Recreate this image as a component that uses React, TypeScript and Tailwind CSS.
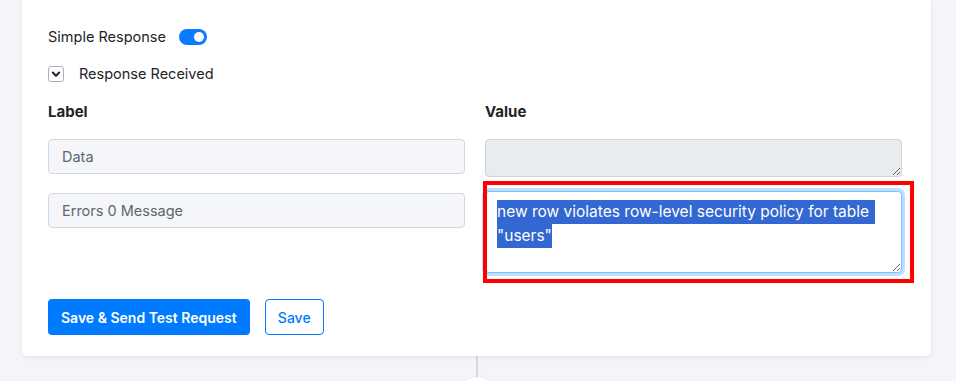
import React from "react";

export default function App() {
  return (
    <div
      className="relative h-[381px] w-[956px] overflow-hidden bg-[#f3f5f8] text-[#212529]"
      style={{ fontFamily: "Inter, 'Noto Sans', sans-serif" }}
    >
      <div className="relative z-10 ml-[22px] w-[909px] rounded-b-[5px] bg-white pl-[26px] pr-[29px] pt-[27px] pb-[21px] shadow-[0_1px_4px_rgba(0,0,0,0.08)]">
        {/* Simple Response toggle */}
        <div className="flex h-[20px] items-center gap-[13px] text-[14.5px]">
          <span>Simple Response</span>
          <span className="relative inline-block h-[16px] w-[28px] rounded-full bg-[#0b7bff]">
            <span className="absolute right-[3px] top-[3px] h-[10px] w-[10px] rounded-full bg-white" />
          </span>
        </div>

        {/* Response Received */}
        <div className="mt-[19px] flex h-[16px] items-center gap-[15px] text-[14.5px]">
          <span className="flex h-[16px] w-[16px] items-center justify-center rounded-[3px] border border-[#aab1b9] bg-white">
            <svg width="12" height="12" viewBox="0 0 12 12" fill="none">
              <path d="M2.8 4.5 L6 7.7 L9.2 4.5" stroke="#212529" strokeWidth="2" strokeLinecap="round" strokeLinejoin="round" />
            </svg>
          </span>
          <span>Response Received</span>
        </div>

        {/* Headers */}
        <div className="mt-[19px] grid h-[20px] grid-cols-2 items-center gap-x-[20px] text-[15px] font-bold">
          <span>Label</span>
          <span>Value</span>
        </div>

        {/* Fields */}
        <div className="mt-[18px] grid grid-cols-2 gap-x-[20px]">
          <div className="flex h-[35px] items-center rounded-[4px] border border-[#d3d8de] bg-[#f4f6f9] px-[13px] text-[14.5px] text-[#5f666d]">
            Data
          </div>
          <textarea
            readOnly
            className="block h-[38px] w-full resize-y rounded-[4px] border border-[#ced4da] bg-[#e9ecef] outline-none"
          />

          <div className="mt-[16px] flex h-[35px] items-center rounded-[4px] border border-[#d3d8de] bg-[#f4f6f9] px-[13px] text-[14.5px] text-[#5f666d]">
            Errors 0 Message
          </div>
          <div className="relative mt-[14px]">
            <div className="h-[82px] w-full resize-y overflow-auto rounded-[4px] border border-[#80bdff] bg-white px-[11px] pt-[8px] text-[15.5px] leading-[24px] text-white shadow-[0_0_0_3px_rgba(0,123,255,0.25)]">
              <div>
                <span className="inline-block bg-[#3367d1] pr-[6px]">new row violates row-level security policy for table</span>
              </div>
              <div>
                <span className="inline-block bg-[#3367d1]">"users"</span>
              </div>
            </div>
            <div className="pointer-events-none absolute bottom-[-10px] left-[-2px] right-[-12px] top-[-10px] border-4 border-[#ff0000]" />
          </div>
        </div>

        {/* Buttons */}
        <div className="mt-[26px] flex items-center gap-[15px]">
          <button className="h-[36px] rounded-[4px] bg-[#007bff] px-[13px] text-[14px] font-semibold text-white">
            Save &amp; Send Test Request
          </button>
          <button className="h-[36px] w-[59px] rounded-[4px] border border-[#007bff] bg-white text-[14px] font-medium text-[#007bff]">
            Save
          </button>
        </div>
      </div>

      {/* connector line */}
      <div className="absolute left-[476px] top-[350px] h-[40px] w-[2px] bg-[#d4d8df]" />
      <div className="absolute left-[459px] top-[377px] h-[37px] w-[37px] rounded-full bg-white shadow-[0_0_3px_rgba(0,0,0,0.08)]" />
    </div>
  );
}
